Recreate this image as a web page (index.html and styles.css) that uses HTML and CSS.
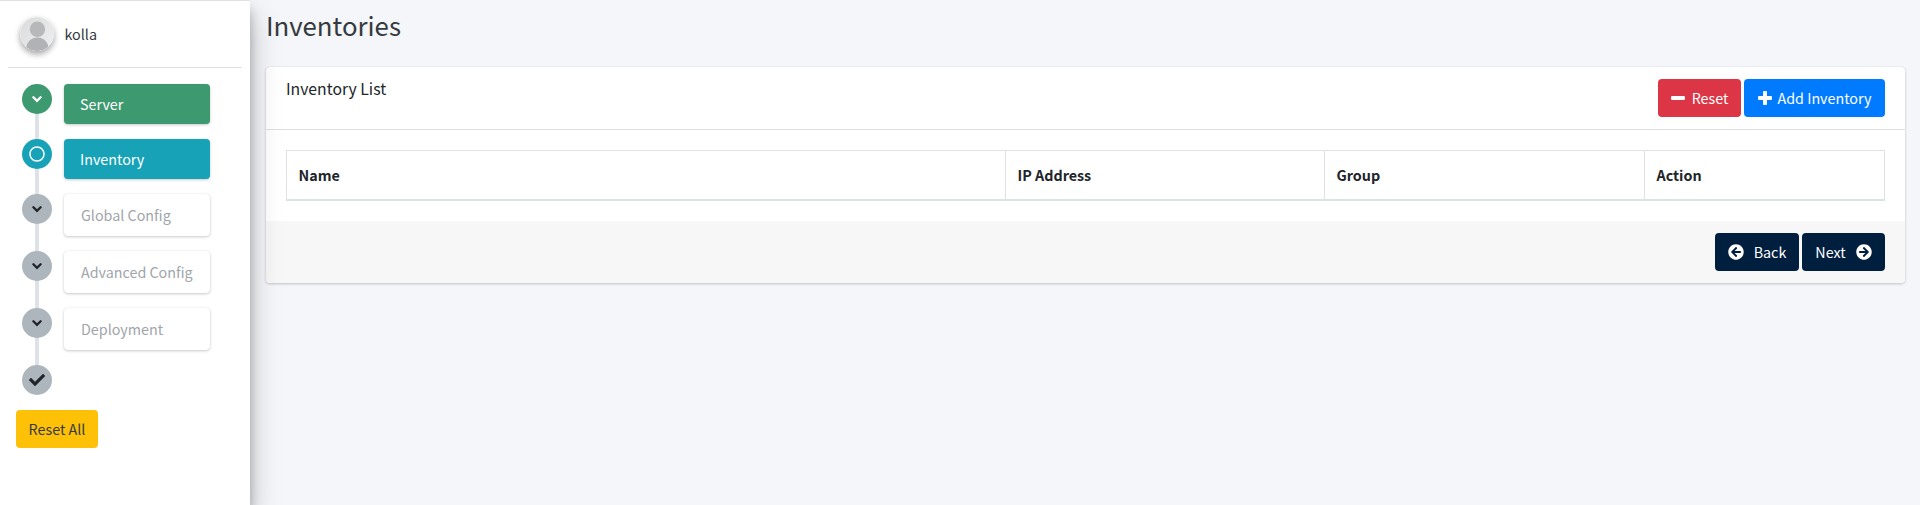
FILE: index.html
```html
<!DOCTYPE html>
<html lang="en">
<head>
<meta charset="utf-8">
<title>Inventories</title>
<link rel="stylesheet" href="styles.css">
</head>
<body>
<div class="layout">
  <aside class="sidebar">
    <div class="user-panel">
      <svg class="avatar" viewBox="0 0 34 34">
        <defs>
          <clipPath id="avatar-clip"><circle cx="17" cy="17" r="17"/></clipPath>
          <linearGradient id="avatar-bg" x1="0" y1="0" x2="1" y2="1"><stop offset="0" stop-color="#d8dadb"/><stop offset="1" stop-color="#eff0f1"/></linearGradient>
        </defs>
        <g clip-path="url(#avatar-clip)">
          <rect width="34" height="34" fill="url(#avatar-bg)"/>
          <circle cx="17.400" cy="12.300" r="7.700" fill="#b6b8ba"/>
          <ellipse cx="17.400" cy="31" rx="11" ry="10.600" fill="#b0b2b5"/>
        </g>
      </svg>
      <span class="user-name">kolla</span>
    </div>
    <nav class="timeline">
      <a class="step done"><span class="dot"><svg class="chev"><use href="#chevron"/></svg></span><span class="label">Server</span></a>
      <a class="step active"><span class="dot"><svg class="ic16"><use href="#ring"/></svg></span><span class="label">Inventory</span></a>
      <a class="step"><span class="dot"><svg class="chev"><use href="#chevron"/></svg></span><span class="label">Global Config</span></a>
      <a class="step"><span class="dot"><svg class="chev"><use href="#chevron"/></svg></span><span class="label">Advanced Config</span></a>
      <a class="step"><span class="dot"><svg class="chev"><use href="#chevron"/></svg></span><span class="label">Deployment</span></a>
      <div class="step last"><span class="dot"><svg class="ic16"><use href="#check"/></svg></span></div>
    </nav>
    <button class="btn warning">Reset All</button>
  </aside>
  <main class="content">
    <h1 class="title">Inventories</h1>
    <section class="card">
      <header class="card-header">
        <h3 class="card-title">Inventory List</h3>
        <div class="actions">
          <button class="btn danger"><svg class="ic14"><use href="#minus"/></svg>Reset</button>
          <button class="btn primary"><svg class="ic14"><use href="#plus"/></svg>Add Inventory</button>
        </div>
      </header>
      <div class="card-body">
        <table class="table">
          <colgroup><col class="name-col"><col class="ip-col"><col class="group-col"><col></colgroup>
          <thead><tr><th>Name</th><th>IP Address</th><th>Group</th><th>Action</th></tr></thead>
        </table>
      </div>
      <footer class="card-footer">
        <button class="btn navy back"><svg class="ic16 flip"><use href="#arrow-right"/></svg>Back</button>
        <button class="btn navy next">Next<svg class="ic16"><use href="#arrow-right"/></svg></button>
      </footer>
    </section>
  </main>
</div>
<svg class="defs" width="0" height="0">
  <symbol id="chevron" viewBox="0 0 10 10"><path d="M1.400 3.200 5 6.800l3.600-3.600" fill="none" stroke="currentColor" stroke-width="2.300" stroke-linecap="round"/></symbol>
  <symbol id="check" viewBox="0 0 512 512"><path d="M173.900 439.400l-166.400-166.400c-10-10-10-26.200 0-36.200l36.200-36.200c10-10 26.200-10 36.200 0L192 312.700 432.100 72.600c10-10 26.200-10 36.200 0l36.200 36.200c10 10 10 26.200 0 36.200L210.100 439.400c-10 10-26.200 10-36.200 0z"/></symbol>
  <symbol id="ring" viewBox="0 0 512 512"><path d="M256 8C119 8 8 119 8 256s111 248 248 248 248-111 248-248S393 8 256 8zm0 448c-110.500 0-200-89.500-200-200S145.500 56 256 56s200 89.500 200 200-89.500 200-200 200z"/></symbol>
  <symbol id="minus" viewBox="0 0 14 16"><rect y="6" width="14" height="4" rx="1.200"/></symbol>
  <symbol id="plus" viewBox="0 0 14 16"><path d="M6 1h2q1 0 1 1v4h4q1 0 1 1v2q0 1-1 1H9v4q0 1-1 1H6q-1 0-1-1v-4H1q-1 0-1-1V7q0-1 1-1h4V2q0-1 1-1z"/></symbol>
  <symbol id="arrow-right" viewBox="0 0 512 512"><path d="M256 8c137 0 248 111 248 248S393 504 256 504 8 393 8 256 119 8 256 8zm-28.900 143.600l75.500 72.400H120c-13.300 0-24 10.700-24 24v16c0 13.300 10.700 24 24 24h182.600l-75.500 72.400c-9.700 9.300-9.900 24.800-.4 34.300l11 10.900c9.400 9.400 24.600 9.400 33.900 0L404.300 273c9.400-9.400 9.400-24.600 0-33.900L271.600 106.300c-9.400-9.400-24.600-9.400-33.900 0l-11 10.900c-9.500 9.600-9.300 25.100.4 34.400z"/></symbol>
</svg>
</body>
</html>
```

FILE: styles.css
```css
* { box-sizing: border-box; }
html { height: 100%; overflow: hidden; }
body {
  height: 100%;
  margin: 0;
  overflow: hidden;
  font: 14.32px/24px "Noto Sans CJK SC", "Noto Sans", sans-serif;
  color: #212529;
  background: #f4f6f9;
}
.defs { display: block; }
svg { fill: currentColor; flex: none; }
.layout { display: flex; height: 100%; }

.sidebar {
  position: relative;
  z-index: 1;
  width: 250px;
  flex: none;
  padding: 0 8px;
  background: #fff;
  border-top: 1px solid #dee2e6;
  box-shadow: 0 14px 28px rgba(0,0,0,.25), 0 10px 10px rgba(0,0,0,.22);
}
.user-panel {
  display: flex;
  align-items: flex-start;
  height: 67px;
  padding: 16px 0 0 12px;
  border-bottom: 1px solid #dee2e6;
}
.avatar {
  width: 34px;
  height: 34px;
  border-radius: 50%;
  box-shadow: 0 3px 6px rgba(0,0,0,.16), 0 3px 6px rgba(0,0,0,.23);
}
.user-name { margin: 5px 0 0 10.5px; color: #343a40; }

.timeline {
  display: flex;
  flex-direction: column;
  gap: 15px;
  padding: 16px 0 0 14px;
}
.step { display: flex; gap: 12px; position: relative; }
.step::before {
  content: "";
  position: absolute;
  left: 13px;
  top: 0;
  bottom: -15px;
  width: 4px;
  background: #dee2e6;
}
.step.last::before { display: none; }
.dot {
  position: relative;
  display: flex;
  align-items: center;
  justify-content: center;
  width: 30px;
  height: 30px;
  padding: 0 1px 1px 0;
  border-radius: 50%;
  background: #adb5bd;
}
.label {
  width: 146px;
  height: 42px;
  padding: 8px 16px;
  border: 1px solid transparent;
  border-radius: 4px;
  background: #fff;
  color: #a0a5aa;
  white-space: nowrap;
  box-shadow: 0 0 1px rgba(0,0,0,.125), 0 1px 3px rgba(0,0,0,.2);
}
.done .label, .active .label { height: 40px; border: 0; padding: 8px 16px; color: #fff; }
.done .dot, .active .dot { color: #fff; }
.done .dot, .done .label { background: #3d9970; }
.active .dot, .active .label { background: #17a2b8; }
.chev { width: 10px; height: 10px; }
.ic16 { width: 16px; height: 16px; }
.ic14 { width: 14px; height: 16px; }
.flip { transform: scaleX(-1); }

.btn {
  display: inline-flex;
  align-items: center;
  justify-content: center;
  height: 38px;
  padding: 0;
  border: 0;
  border-radius: 4px;
  font: inherit;
  color: #fff;
  white-space: nowrap;
}
.warning { width: 82px; margin: 15px 0 0 8px; background: #ffc107; color: #343a40; }
.danger { width: 83px; gap: 7px; background: #dc3545; }
.primary { width: 141px; gap: 6px; background: #007bff; }
.navy { background: #001f3f; }
.back { width: 84px; gap: 10px; }
.next { width: 83px; gap: 10px; }

.content { flex: 1; padding: 7px 15px 0 16px; }
.title { margin: 0 0 25px; font-size: 25.78px; line-height: 35px; font-weight: 400; color: #343a40; }
.card {
  border-radius: 4px;
  background: #fff;
  box-shadow: 0 0 1px rgba(0,0,0,.125), 0 1px 3px rgba(0,0,0,.2);
}
.card-header {
  display: flex;
  justify-content: space-between;
  height: 63px;
  padding: 12px 20px;
  border-bottom: 1px solid rgba(0,0,0,.125);
}
.card-title { margin: 0; font-size: 15.75px; line-height: 20px; font-weight: 400; }
.actions { display: flex; gap: 3px; }
.card-body { padding: 20px; }
.table { width: 100%; height: 51px; table-layout: fixed; border-collapse: separate; border-spacing: 0; border: 1px solid #dee2e6; border-bottom-width: 2px; }
.table th { padding: 0 0 0 11.5px; text-align: left; font-weight: 700; border-left: 1px solid #dee2e6; }
.table th:first-child { border-left: 0; }
.name-col { width: 718px; }
.ip-col { width: 319px; }
.group-col { width: 320px; }
.card-footer {
  display: flex;
  justify-content: flex-end;
  gap: 3px;
  padding: 12px 20px;
  border-radius: 0 0 4px 4px;
  background: #f7f7f7;
}
```
